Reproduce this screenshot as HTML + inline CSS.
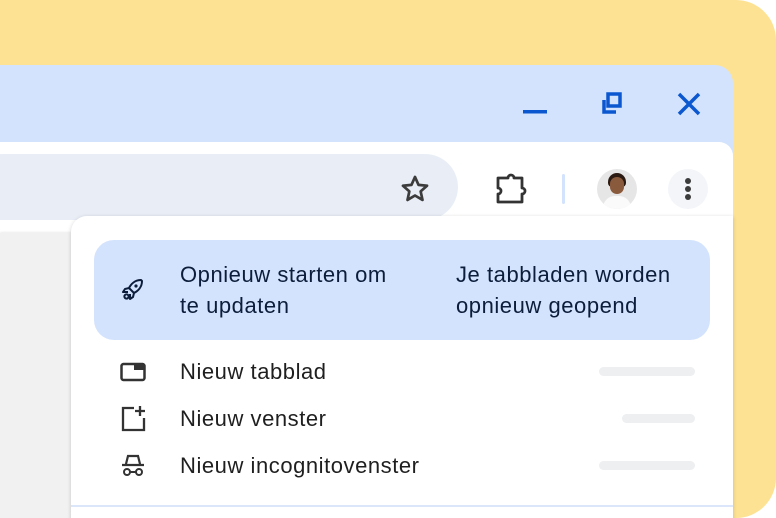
<!DOCTYPE html>
<html><head><style>
*{margin:0;padding:0;box-sizing:border-box}
html,body{width:776px;height:518px;overflow:hidden}
body{background:#fff;font-family:"Liberation Sans",Arial,sans-serif;position:relative}
.bg{position:absolute;left:0;top:0;width:776px;height:518px;background:#fde293;border-radius:0 40px 40px 0}
.win{position:absolute;left:0;top:65px;width:733px;height:453px;background:#d3e3fd;border-radius:0 18px 0 0;overflow:hidden}
.tb{position:absolute;left:0;top:77px;width:733px;height:400px;background:#fff;border-radius:0 14px 0 0}
.omni{position:absolute;left:-30px;top:12px;width:488px;height:66px;background:#e9eef6;border-radius:33px}
.content{position:absolute;left:0;top:91px;width:733px;height:300px;background:#f1f1f1;box-shadow:0 -1px 2px rgba(0,0,0,.08)}
.menu{position:absolute;left:71px;top:216px;width:662px;height:310px;background:#fff;border-radius:16px 0 0 0;box-shadow:0 1px 4px rgba(0,0,0,.18)}
.hl{position:absolute;left:23px;top:24px;width:616px;height:100px;background:#d3e3fd;border-radius:20px}
.t{position:absolute;font-size:22px;letter-spacing:0.55px;color:#1f1f1f;line-height:31px;white-space:nowrap}
.hl .t{color:#0b1d3a}
.bar{position:absolute;height:9px;background:#eeeff1;border-radius:5px}
.line{position:absolute;left:0;top:289px;width:662px;height:2px;background:#dbe6fb}
</style></head><body>
<div class="bg"></div>
<div class="win">
 <svg style="position:absolute;left:520px;top:25px" width="200" height="30">
  <rect x="3" y="20" width="24" height="3.5" fill="#0b57d0"/>
  <path d="M84 10v12h12M88 4h12v12h-12z" fill="none" stroke="#0b57d0" stroke-width="3.5"/>
  <path d="M159 4l20 20M179 4l-20 20" stroke="#0b57d0" stroke-width="3.5"/>
 </svg>
 <div class="tb">
  <div class="omni"></div>
  <svg style="position:absolute;left:398px;top:30px" width="34" height="34" viewBox="0 0 24 24"><path d="M12 3.5l2.5 5.6 6 .6-4.5 4 1.3 6L12 16.6 6.7 19.7 8 13.7l-4.5-4 6-.6z" fill="none" stroke="#3c3c3c" stroke-width="1.9" stroke-linejoin="round"/></svg>
  <svg style="position:absolute;left:494px;top:28px" width="36" height="36" viewBox="0 0 36 36"><path d="M4 8h10a3 3 0 0 1 6 0h8v10a3 3 0 0 1 0 6v8H4v-8a3 3 0 0 0 0-6z" fill="none" stroke="#333" stroke-width="2.8" stroke-linejoin="round"/></svg>
  <div style="position:absolute;left:562px;top:32px;width:3px;height:30px;background:#d3e3fd;border-radius:2px"></div>
  <div style="position:absolute;left:597px;top:27px;width:40px;height:40px;border-radius:50%;background:#e6e6e6;overflow:hidden">
   <div style="position:absolute;left:11px;top:4px;width:18px;height:14px;background:#2a1a12;border-radius:9px 9px 4px 4px"></div>
   <div style="position:absolute;left:13px;top:8px;width:14px;height:17px;background:#8a5a3c;border-radius:7px"></div>
   <div style="position:absolute;left:6px;top:27px;width:28px;height:16px;background:#fafafa;border-radius:12px 12px 0 0"></div>
  </div>
  <div style="position:absolute;left:668px;top:27px;width:40px;height:40px;border-radius:50%;background:#f3f5f9"></div>
  <svg style="position:absolute;left:668px;top:27px" width="40" height="40"><circle cx="20" cy="12" r="3" fill="#3c3c3c"/><circle cx="20" cy="20" r="3" fill="#3c3c3c"/><circle cx="20" cy="28" r="3" fill="#3c3c3c"/></svg>
  <div class="content"></div>
 </div>
</div>
<div class="menu">
 <div class="hl">
  <svg style="position:absolute;left:25px;top:36px" width="28" height="28" viewBox="0 0 28 28"><path d="M22 4c-6 0-10 4-12 8l5 5c4-2 8-6 8-12zM10 12l-4 1-2 3 5 0M15 17l-1 4-3 2 0-5M9 19a2 2 0 1 1-3 3 2 2 0 0 1 3-3z" fill="none" stroke="#0b1d3a" stroke-width="2" stroke-linejoin="round"/><circle cx="17" cy="10" r="1.6" fill="#0b1d3a"/></svg>
  <div class="t" style="left:86px;top:19px">Opnieuw starten om<br>te updaten</div>
  <div class="t" style="left:362px;top:19px">Je tabbladen worden<br>opnieuw geopend</div>
 </div>
 <svg style="position:absolute;left:49px;top:146px" width="28" height="22"><rect x="1.5" y="2" width="23" height="16" rx="2" fill="none" stroke="#333" stroke-width="2.5"/><rect x="14" y="2" width="11" height="6" fill="#333"/></svg>
 <div class="t" style="left:109px;top:140px">Nieuw tabblad</div>
 <div class="bar" style="left:528px;top:151px;width:96px"></div>
 <svg style="position:absolute;left:49px;top:188px" width="28" height="28"><path d="M14 4H3v22h21V14M20 2v10M15 7h10" fill="none" stroke="#333" stroke-width="2.3"/></svg>
 <div class="t" style="left:109px;top:187px">Nieuw venster</div>
 <div class="bar" style="left:551px;top:198px;width:73px"></div>
 <svg style="position:absolute;left:49px;top:236px" width="26" height="26"><path d="M6 12l2-8h10l2 8M2 13h22" fill="none" stroke="#333" stroke-width="2.2"/><circle cx="7" cy="20" r="3" fill="none" stroke="#333" stroke-width="2"/><circle cx="19" cy="20" r="3" fill="none" stroke="#333" stroke-width="2"/><path d="M10 20h6" stroke="#333" stroke-width="2"/></svg>
 <div class="t" style="left:109px;top:234px">Nieuw incognitovenster</div>
 <div class="bar" style="left:528px;top:245px;width:96px"></div>
 <div class="line"></div>
</div>
</body></html>
